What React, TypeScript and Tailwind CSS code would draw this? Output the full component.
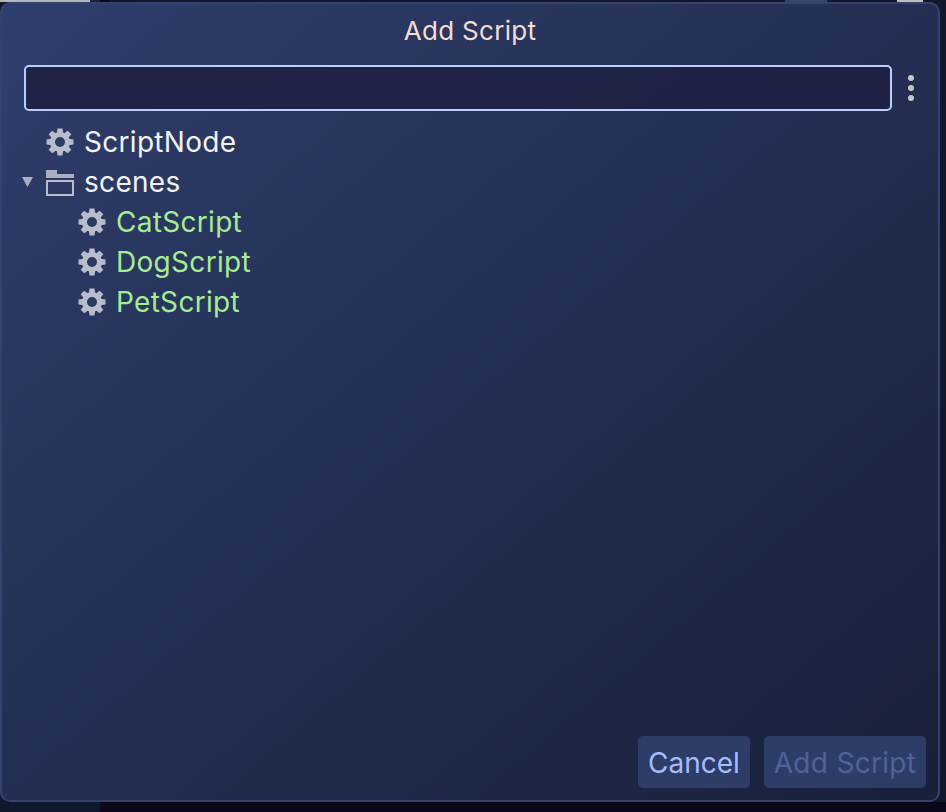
import React from 'react';

const GearIcon: React.FC = () => (
  <svg width="28" height="28" viewBox="0 0 28 28" className="shrink-0">
    <g fill="#b8bdcb">
      {[0, 45, 90, 135, 180, 225, 270, 315].map((deg) => (
        <path key={deg} d="M11.500 0.500h5l0.700 5.500h-6.400z" transform={`rotate(${deg} 14 14)`} />
      ))}
      <path
        fillRule="evenodd"
        d="M14 4a10 10 0 1 0 0 20a10 10 0 1 0 0-20zM14 9a5 5 0 1 1 0 10a5 5 0 1 1 0-10z"
      />
    </g>
  </svg>
);

const FolderIcon: React.FC = () => (
  <svg width="28" height="26" viewBox="0 0 28 26" className="shrink-0 mt-[2px]">
    <path d="M0 0h11v4h17v4H0z" fill="#a9afc0" />
    <rect x="1" y="11" width="26" height="14" fill="none" stroke="#b8bdcb" strokeWidth="2" />
  </svg>
);

const scripts = ['CatScript', 'DogScript', 'PetScript'];

const App: React.FC = () => {
  return (
    <div className="w-[946px] h-[812px] overflow-hidden bg-[#10182c] font-['Inter','Liberation_Sans',sans-serif]">
      {/* whatever is behind the dialog, only a sliver shows */}
      <div className="flex h-[2px] bg-[#14162e]">
        <div className="w-[90px] bg-[#b4b4bc]" />
        <div className="w-[10px] bg-[#1c2340]" />
        <div className="w-[9px] bg-[#08081a]" />
        <div className="w-[676px]" />
        <div className="w-[42px] bg-[#3a4468]" />
        <div className="w-[70px]" />
        <div className="w-[26px] bg-[#c0c0b8]" />
      </div>
      <div className="w-[940px] h-[800px] flex flex-col rounded-[10px] border-2 border-[#33426e] bg-gradient-to-br from-[#2f3e6c] to-[#18203a]">
        <div className="h-[61px] pb-[8px] flex items-center justify-center text-[26px] tracking-[0.3px] text-[#f5dcd5]">Add Script</div>
        <div className="flex items-center pl-[22px] h-[46px]">
          <div className="w-[868px] h-[46px] rounded-[5px] border-2 border-[#bccdfb] bg-[#1f2142]/90" />
          <div className="ml-[16px] flex flex-col gap-[4px]">
            <span className="w-[6px] h-[6px] rounded-full bg-[#c6c6ce]" />
            <span className="w-[6px] h-[6px] rounded-full bg-[#c6c6ce]" />
            <span className="w-[6px] h-[6px] rounded-full bg-[#c6c6ce]" />
          </div>
        </div>
        <div className="flex-1 pt-[11px] text-[28px] tracking-[0.3px] leading-[40px]">
          <div className="flex items-center h-[40px] pl-[44px] gap-[10px] text-[#f2f4f9]">
            <GearIcon />
            <span>ScriptNode</span>
          </div>
          <div className="flex items-center h-[40px] pl-[20px] text-[#f2f4f9]">
            <svg width="11" height="10" viewBox="0 0 11 10" className="shrink-0 mr-[13px]">
              <path d="M0 0h11L5.500 10z" fill="#a9afc0" />
            </svg>
            <FolderIcon />
            <span className="ml-[10px]">scenes</span>
          </div>
          {scripts.map((name) => (
            <div key={name} className="flex items-center h-[40px] pl-[76px] gap-[10px] text-[#a6ec92]">
              <GearIcon />
              <span>{name}</span>
            </div>
          ))}
        </div>
        <div className="flex justify-end gap-[14px] pr-[12px] pb-[12px]">
          <button className="h-[52px] w-[112px] pt-[1px] rounded-[5px] bg-[#2e3c68] text-[28px] text-[#a3bdff]">Cancel</button>
          <button className="h-[52px] w-[162px] pt-[1px] rounded-[5px] bg-[#2e3c68] text-[28px] tracking-[0.3px] text-[#4f6397]">Add Script</button>
        </div>
      </div>
      <div className="flex h-[10px]">
        <div className="w-[100px]" />
        <div className="flex-1 bg-[#0a0818]" />
      </div>
    </div>
  );
};

export default App;
